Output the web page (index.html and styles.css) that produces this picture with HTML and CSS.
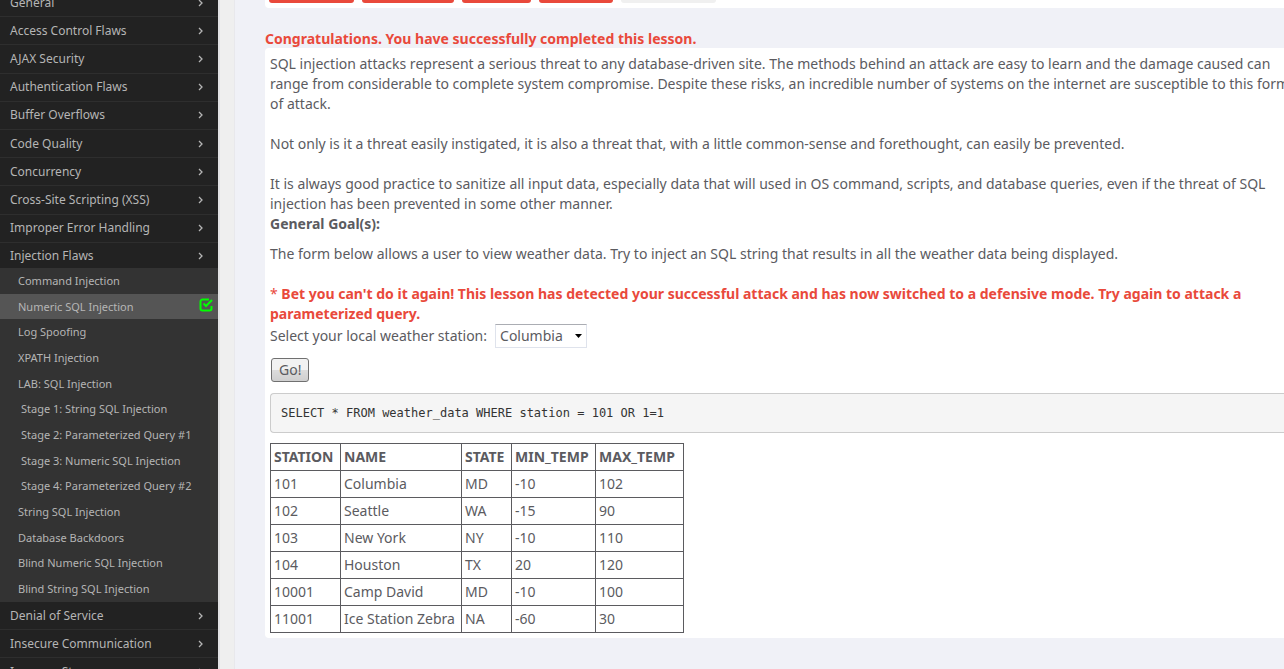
FILE: index.html
```html
<!DOCTYPE html>
<html lang="en">
<head>
<meta charset="utf-8">
<title>Numeric SQL Injection</title>
<link rel="stylesheet" href="styles.css">
</head>
<body>
<div class="app">
  <nav class="sidebar">
    <ul class="menu top">
      <li><a href="#">General<svg class="chev" viewBox="0 0 6 8"><path d="M1 1l3 3-3 3"/></svg></a></li>
      <li><a href="#">Access Control Flaws<svg class="chev" viewBox="0 0 6 8"><path d="M1 1l3 3-3 3"/></svg></a></li>
      <li><a href="#">AJAX Security<svg class="chev" viewBox="0 0 6 8"><path d="M1 1l3 3-3 3"/></svg></a></li>
      <li><a href="#">Authentication Flaws<svg class="chev" viewBox="0 0 6 8"><path d="M1 1l3 3-3 3"/></svg></a></li>
      <li><a href="#">Buffer Overflows<svg class="chev" viewBox="0 0 6 8"><path d="M1 1l3 3-3 3"/></svg></a></li>
      <li><a href="#">Code Quality<svg class="chev" viewBox="0 0 6 8"><path d="M1 1l3 3-3 3"/></svg></a></li>
      <li><a href="#">Concurrency<svg class="chev" viewBox="0 0 6 8"><path d="M1 1l3 3-3 3"/></svg></a></li>
      <li><a href="#">Cross-Site Scripting (XSS)<svg class="chev" viewBox="0 0 6 8"><path d="M1 1l3 3-3 3"/></svg></a></li>
      <li><a href="#">Improper Error Handling<svg class="chev" viewBox="0 0 6 8"><path d="M1 1l3 3-3 3"/></svg></a></li>
      <li><a href="#">Injection Flaws<svg class="chev" viewBox="0 0 6 8"><path d="M1 1l3 3-3 3"/></svg></a></li>
    </ul>
    <ul class="submenu">
      <li><a href="#">Command Injection</a></li>
      <li class="active"><a href="#">Numeric SQL Injection<svg class="done" viewBox="0 0 14 14"><path d="M10 1.500H3.500a2 2 0 0 0-2 2v7a2 2 0 0 0 2 2h7a2 2 0 0 0 2-2V8"/><path d="M4.500 5.500L7 8l6-6"/></svg></a></li>
      <li><a href="#">Log Spoofing</a></li>
      <li><a href="#">XPATH Injection</a></li>
      <li><a href="#">LAB: SQL Injection</a></li>
      <li class="stage"><a href="#">Stage 1: String SQL Injection</a></li>
      <li class="stage"><a href="#">Stage 2: Parameterized Query #1</a></li>
      <li class="stage"><a href="#">Stage 3: Numeric SQL Injection</a></li>
      <li class="stage"><a href="#">Stage 4: Parameterized Query #2</a></li>
      <li><a href="#">String SQL Injection</a></li>
      <li><a href="#">Database Backdoors</a></li>
      <li><a href="#">Blind Numeric SQL Injection</a></li>
      <li><a href="#">Blind String SQL Injection</a></li>
    </ul>
    <ul class="menu">
      <li><a href="#">Denial of Service<svg class="chev" viewBox="0 0 6 8"><path d="M1 1l3 3-3 3"/></svg></a></li>
      <li><a href="#">Insecure Communication<svg class="chev" viewBox="0 0 6 8"><path d="M1 1l3 3-3 3"/></svg></a></li>
      <li><a href="#">Insecure Storage<svg class="chev" viewBox="0 0 6 8"><path d="M1 1l3 3-3 3"/></svg></a></li>
    </ul>
  </nav>
  <div class="gutter"></div>
  <main class="main">
    <div class="toolbar"><span class="tab t1"></span><span class="tab t2"></span><span class="tab t3"></span><span class="tab t4"></span><span class="tab off"></span></div>
    <p class="message">Congratulations. You have successfully completed this lesson.</p>
    <section class="lesson">
      <p>SQL injection attacks represent a serious threat to any database-driven site. The methods behind an attack are easy to learn and the damage caused can<br>range from considerable to complete system compromise. Despite these risks, an incredible number of systems on the internet are susceptible to this form<br>of attack.</p>
      <p>Not only is it a threat easily instigated, it is also a threat that, with a little common-sense and forethought, can easily be prevented.</p>
      <p class="tight">It is always good practice to sanitize all input data, especially data that will used in OS command, scripts, and database queries, even if the threat of SQL<br>injection has been prevented in some other manner.</p>
      <h2>General Goal(s):</h2>
      <p>The form below allows a user to view weather data. Try to inject an SQL string that results in all the weather data being displayed.</p>
      <p class="alert">* <b>Bet you can't do it again! This lesson has detected your successful attack and has now switched to a defensive mode. Try again to attack a<br>parameterized query.</b></p>
      <form>
        <div class="field"><label for="station">Select your local weather station:</label>
          <span class="picker"><select id="station"><option>Columbia</option><option>Seattle</option><option>New York</option><option>Houston</option></select><svg class="arrow" viewBox="0 0 7 4"><path d="M0 0h7L3.500 4z"/></svg></span></div>
        <button type="button">Go!</button>
      </form>
      <pre>SELECT * FROM weather_data WHERE station = 101 OR 1=1</pre>
      <table>
        <colgroup><col class="c-station"><col class="c-name"><col class="c-state"><col class="c-min"><col class="c-max"></colgroup>
        <thead><tr><th>STATION</th><th>NAME</th><th>STATE</th><th>MIN_TEMP</th><th>MAX_TEMP</th></tr></thead>
        <tbody>
          <tr><td>101</td><td>Columbia</td><td>MD</td><td>-10</td><td>102</td></tr>
          <tr><td>102</td><td>Seattle</td><td>WA</td><td>-15</td><td>90</td></tr>
          <tr><td>103</td><td>New York</td><td>NY</td><td>-10</td><td>110</td></tr>
          <tr><td>104</td><td>Houston</td><td>TX</td><td>20</td><td>120</td></tr>
          <tr><td>10001</td><td>Camp David</td><td>MD</td><td>-10</td><td>100</td></tr>
          <tr><td>11001</td><td>Ice Station Zebra</td><td>NA</td><td>-60</td><td>30</td></tr>
        </tbody>
      </table>
    </section>
  </main>
</div>
</body>
</html>
```
FILE: styles.css
```css
* { box-sizing: border-box; }
body {
  margin: 0;
  height: 100vh;
  overflow: hidden;
  background: #f0f1f7;
  color: #5b5b5f;
  font: 14px/20px "Noto Sans", "Open Sans", sans-serif;
}
.app { display: flex; height: 100%; overflow: hidden; }
.sidebar { flex: 0 0 218px; background: #222; overflow: hidden; }
.gutter { flex: 0 0 17px; background: #efefef; border-left: 2px solid #e2e2e4; border-right: 1px solid #e8e8ec; }
ul { list-style: none; margin: 0; padding: 0; }
.menu a, .submenu a {
  display: flex;
  align-items: center;
  justify-content: space-between;
  color: #b5b5b5;
  text-decoration: none;
  white-space: nowrap;
}
.menu a { height: 27px; padding: 0 14px 0 10px; font-size: 12px; }
.menu li { border-bottom: 1px solid #2e2e2e; }
/* The list is scrolled a little, and the open section tucks under its submenu. */
.menu.top { display: grid; grid-auto-rows: 1fr; min-height: 282px; margin: -11px 0 -3px; }
.chev { width: 6px; height: 8px; fill: none; stroke: #b5b5b5; stroke-width: 1.3; }
.submenu { position: relative; background: #333; display: grid; grid-auto-rows: 1fr; min-height: 334px; }
.submenu li { display: flex; }
.submenu a { flex: 1; padding: 0 5px 0 18px; font-size: 11px; }
.submenu .stage a { padding-left: 21px; }
.submenu .active { background: #555; }
.done { width: 14px; height: 14px; margin-bottom: 4px; fill: none; stroke: #0f0; stroke-width: 2; }
.main { flex: 1; min-width: 0; padding-left: 30px; overflow: hidden; }
.toolbar { display: flex; gap: 8px; height: 8px; padding-left: 4px; background: #fff; border-radius: 0 0 0 4px; }
.tab { height: 3px; border-radius: 0 0 4px 4px; background: #e9493b; }
.t1 { width: 85px; }
.t2 { width: 92px; }
.t3 { width: 69px; }
.t4 { width: 74px; }
.off { width: 95px; background: #f0f0f0; }
.message { height: 20px; margin: 20px 0 0; color: #e9493b; font-weight: bold; line-height: 22px; white-space: nowrap; }
.lesson { background: #fff; border-radius: 4px 0 0 4px; padding: 6px 0 5px 5px; white-space: nowrap; }
.lesson p { margin: 0 0 20px; }
.lesson .tight, .lesson .alert { margin-bottom: 0; }
.lesson h2 { margin: 0 0 10px; font-size: 14px; line-height: 20px; }
.alert { color: #e9493b; }
.field { display: flex; align-items: center; gap: 8px; height: 24px; }
.picker { display: grid; align-items: center; }
select, .arrow { grid-area: 1 / 1; }
select {
  appearance: none;
  width: 92px;
  height: 24px;
  padding: 0 4px;
  border: 1px solid #dfe3ec;
  border-top-color: #abadb3;
  background: #fff;
  color: inherit;
  font: inherit;
}
.arrow { justify-self: end; width: 7px; height: 4px; margin-right: 5px; fill: #000; pointer-events: none; }
button {
  display: block;
  margin: 10px 0 11px 1px;
  height: 24px;
  padding: 0 7px;
  border: 1px solid #707070;
  border-radius: 3px;
  background: linear-gradient(#f2f2f2 0 50%, #dcdcdc 50%, #cfcfcf);
  color: inherit;
  font: inherit;
}
pre {
  margin: 0 0 10px;
  padding: 9px 10px;
  border: 1px solid #ccc;
  border-right: 0;
  border-radius: 4px 0 0 4px;
  background: #f5f5f5;
  color: #333;
  font: 12px/20px "DejaVu Sans Mono", monospace;
}
table { border-collapse: collapse; }
.c-station { width: 70px; }
.c-name { width: 121px; }
.c-state { width: 50px; }
.c-min { width: 84px; }
.c-max { width: 88px; }
th, td { border: 1px solid #5b5b5f; padding: 3px; text-align: left; }
```
